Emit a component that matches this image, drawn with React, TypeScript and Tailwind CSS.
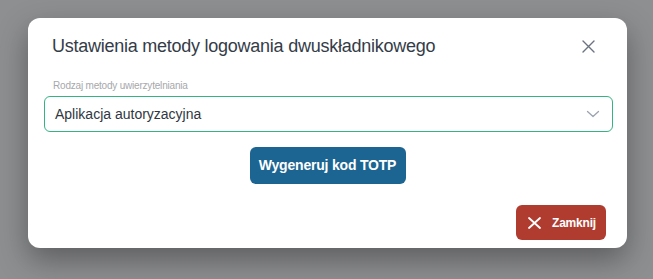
import React from "react";

export default function App() {
  return (
    <div
      className="w-[653px] h-[279px] bg-[#8e8f91] pt-[18px] pl-[28px] overflow-hidden"
      style={{ fontFamily: "'Liberation Sans', Arial, sans-serif" }}
    >
      <div className="w-[599px] h-[230px] bg-white rounded-[12px] shadow-[0_12px_30px_rgba(0,0,0,0.35)] flex flex-col">
        <div className="flex items-center justify-between pl-[24px] pr-[32px] pt-[14px]">
          <h2 className="text-[18px] leading-[28px] tracking-[-0.25px] text-[#343c48]">
            Ustawienia metody logowania dwuskładnikowego
          </h2>
          <svg width="13" height="13" viewBox="0 0 13 13" className="text-[#6b7280]">
            <path d="M1 1L12 12M12 1L1 12" stroke="currentColor" strokeWidth="1.4" strokeLinecap="round" />
          </svg>
        </div>
        <div className="pl-[16px] pr-[14px] mt-[18px]">
          <div className="pl-[9px] text-[10px] leading-[16px] tracking-[-0.2px] text-[#a6a8ab]">
            Rodzaj metody uwierzytelniania
          </div>
          <div className="mt-[2px] h-[36px] border border-[#35b383] rounded-[6px] flex items-center justify-between pl-[10px] pr-[12px]">
            <span className="text-[14px] text-[#2f3742]">Aplikacja autoryzacyjna</span>
            <svg width="14" height="8" viewBox="0 0 14 8" className="text-[#9ca3af]">
              <path d="M1.5 1.5L7 6.5L12.5 1.5" stroke="currentColor" strokeWidth="1.3" fill="none" strokeLinecap="round" strokeLinejoin="round" />
            </svg>
          </div>
        </div>
        <div className="flex justify-center mt-[15px]">
          <button className="w-[156px] h-[37px] rounded-[6px] bg-[#1c6491] text-white font-bold text-[14px] tracking-[-0.2px]">
            Wygeneruj kod TOTP
          </button>
        </div>
        <div className="flex justify-end pr-[21px] mt-[21px]">
          <button className="w-[90px] h-[35px] rounded-[6px] bg-[#b03c30] text-white font-bold text-[12px] tracking-[-0.2px] flex items-center pl-[12px] gap-[11px]">
            <svg width="13" height="12" viewBox="0 0 13 12">
              <path d="M1 1L12 11M12 1L1 11" stroke="white" strokeWidth="1.8" strokeLinecap="round" />
            </svg>
            <span>Zamknij</span>
          </button>
        </div>
      </div>
    </div>
  );
}
